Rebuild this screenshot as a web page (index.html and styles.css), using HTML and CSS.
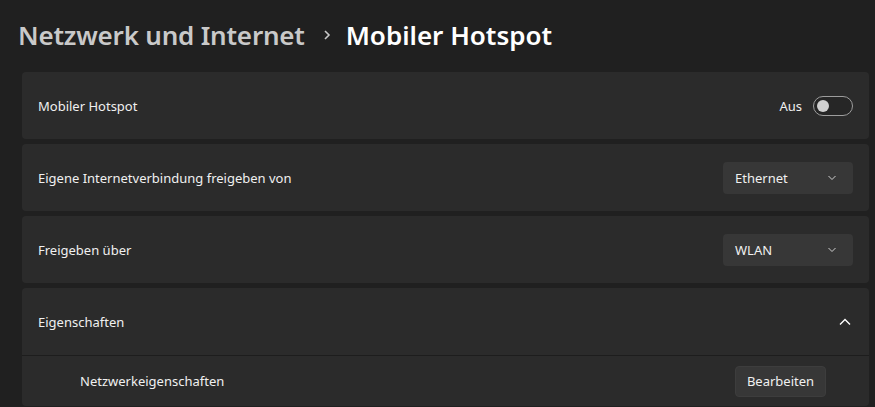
FILE: index.html
```html
<!DOCTYPE html>
<html lang="de">
<head>
<meta charset="utf-8">
<title>Mobiler Hotspot</title>
<link rel="stylesheet" href="styles.css">
</head>
<body>
<div class="page">
  <h1 class="crumbs">
    <span class="crumb-parent">Netzwerk und Internet</span>
    <svg class="crumb-sep" width="10" height="12" viewBox="0 0 10 12"><path d="M3 2 L7 6 L3 10" fill="none" stroke="#c8c8c8" stroke-width="1.6"/></svg>
    <span class="crumb-current">Mobiler Hotspot</span>
  </h1>
  <div class="list">
    <div class="card row">
      <span class="label">Mobiler Hotspot</span>
      <div class="toggle-wrap">
        <span class="toggle-text">Aus</span>
        <span class="toggle"><span class="knob"></span></span>
      </div>
    </div>
    <div class="card row">
      <span class="label">Eigene Internetverbindung freigeben von</span>
      <div class="select">
        <span>Ethernet</span>
        <svg width="10" height="6" viewBox="0 0 10 6"><path d="M1.5 1 L5 4.5 L8.5 1" fill="none" stroke="#cfcfcf" stroke-width="1"/></svg>
      </div>
    </div>
    <div class="card row">
      <span class="label">Freigeben über</span>
      <div class="select">
        <span>WLAN</span>
        <svg width="10" height="6" viewBox="0 0 10 6"><path d="M1.5 1 L5 4.5 L8.5 1" fill="none" stroke="#cfcfcf" stroke-width="1"/></svg>
      </div>
    </div>
    <div class="card expander">
      <div class="row">
        <span class="label">Eigenschaften</span>
        <svg class="chev-up" width="12" height="8" viewBox="0 0 12 8"><path d="M1 6.5 L6 1.5 L11 6.5" fill="none" stroke="#ffffff" stroke-width="1.4"/></svg>
      </div>
      <div class="subrow">
        <span class="label">Netzwerkeigenschaften</span>
        <button class="btn">Bearbeiten</button>
      </div>
    </div>
  </div>
</div>
</body>
</html>
```
FILE: styles.css
```css
* { box-sizing: border-box; }
html, body {
  margin: 0;
  padding: 0;
  background: #202020;
  height: 100%;
  overflow: hidden;
}
body {
  font-family: "Noto Sans", "Open Sans", sans-serif;
  color: #ffffff;
}
.page {
  padding: 12px 6px 0 18px;
}
.crumbs {
  margin: 0;
  height: 46px;
  display: flex;
  align-items: center;
  font-size: 26px;
  font-weight: 600;
  letter-spacing: -0.2px;
  line-height: 1;
}
.crumb-parent { color: #c9c9c9; }
.crumb-sep { margin: 0 14px 0 17px; }
.crumb-current { color: #ffffff; letter-spacing: 0; }
.list {
  margin-top: 14px;
  margin-left: 4px;
  display: flex;
  flex-direction: column;
  gap: 5px;
}
.card {
  background: #2b2b2b;
  border-radius: 4px;
}
.row {
  height: 67px;
  display: flex;
  align-items: center;
  justify-content: space-between;
  padding: 0 16px 0 16px;
}
.label {
  font-size: 13px;
  color: #f0f0f0;
}
.toggle-wrap {
  display: flex;
  align-items: center;
  gap: 11px;
}
.toggle-text { font-size: 13px; color: #f0f0f0; }
.toggle {
  width: 40px;
  height: 20px;
  border: 1px solid #9d9d9d;
  border-radius: 10px;
  display: flex;
  align-items: center;
  padding-left: 3px;
  background: #262626;
}
.knob {
  width: 12px;
  height: 12px;
  border-radius: 50%;
  background: #d0d0d0;
}
.select {
  width: 130px;
  height: 32px;
  background: #373737;
  border-radius: 4px;
  display: flex;
  align-items: center;
  justify-content: space-between;
  padding: 0 16px 0 12px;
  font-size: 13px;
  color: #f0f0f0;
}
.chev-up { margin-right: 2px; }
.expander .row {
  border-bottom: 1px solid #1d1d1d;
  height: 68px;
}
.subrow {
  height: 50px;
  display: flex;
  align-items: center;
  justify-content: space-between;
  padding: 0 43px 0 58px;
}
.btn {
  width: 91px;
  height: 31px;
  background: #373737;
  border: 1px solid #3d3d3d;
  border-radius: 4px;
  color: #f0f0f0;
  font-family: inherit;
  font-size: 13px;
}
```
